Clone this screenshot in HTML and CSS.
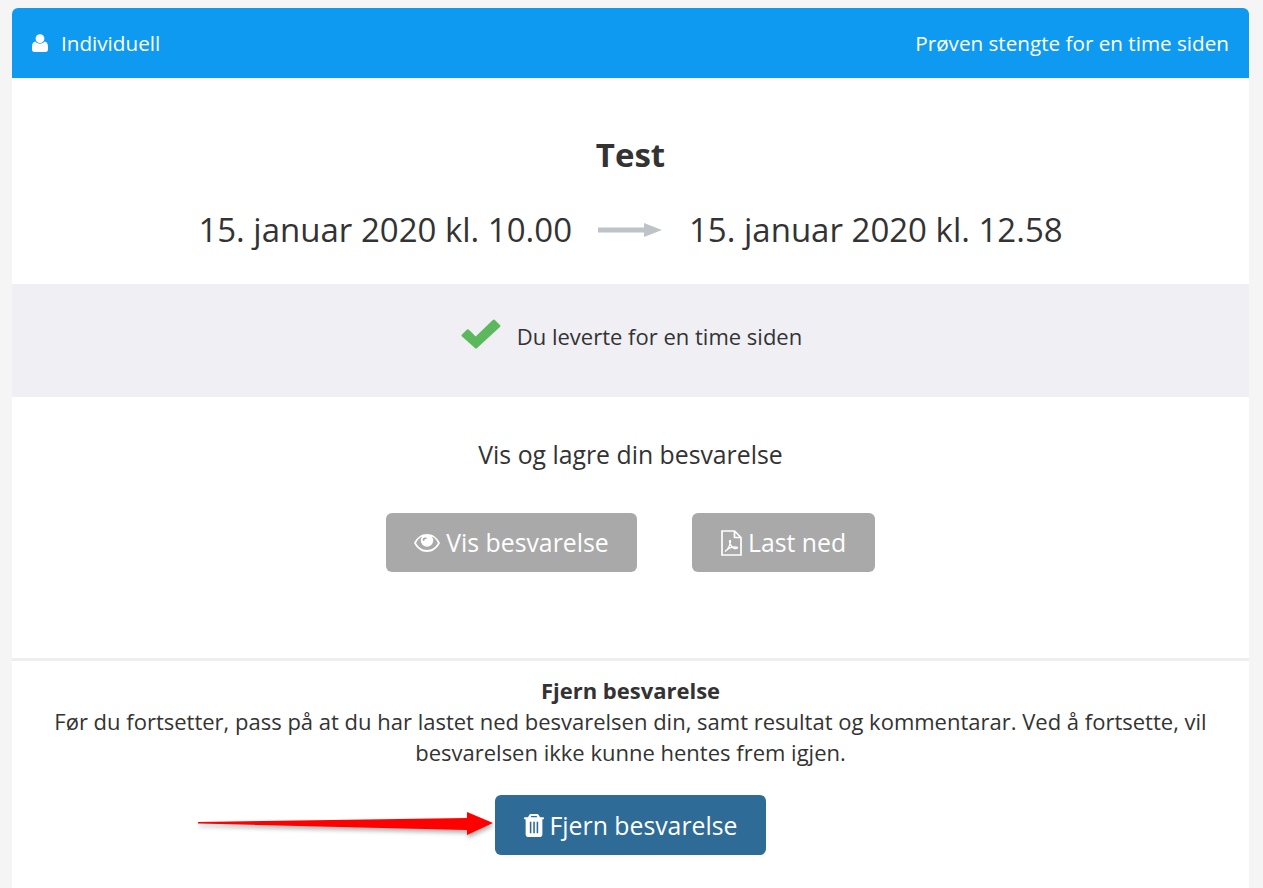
FILE: index.html
```html
<!DOCTYPE html>
<html lang="no">
<head>
<meta charset="utf-8">
<title>Test</title>
<link rel="stylesheet" href="styles.css">
</head>
<body>
<main class="card">
  <header class="card-head">
    <span class="head-left">
      <svg class="icon-user" viewBox="0 0 16 18"><circle cx="8" cy="4.6" r="4.4"/><path d="M3.4 7.6C4.6 9 6.2 9.7 8 9.7s3.400-.7 4.600-2.100C14.700 7.800 16 9.600 16 13v2.600c0 1.400-1 2.400-2.400 2.400H2.400C1 18 0 17 0 15.600V13c0-3.400 1.300-5.200 3.400-5.400z"/></svg>
      Individuell
    </span>
    <span>Prøven stengte for en time siden</span>
  </header>
  <section class="summary">
    <h1 class="title">Test</h1>
    <div class="dates">
      <span>15. januar 2020 kl. 10.00</span>
      <svg class="icon-arrow" viewBox="0 0 65 14"><path d="M0 4.500h46V0l18 7-18 7V9.500H0z"/></svg>
      <span>15. januar 2020 kl. 12.58</span>
    </div>
  </section>
  <section class="status">
    <svg class="icon-check" viewBox="0 0 40 30"><path d="M1 15.500l4.800-4.800a1.500 1.500 0 0 1 2.100 0l6.800 6.800L31.800 1a1.500 1.500 0 0 1 2.100 0l5 5a1.500 1.500 0 0 1 0 2.100L16.100 29a1.500 1.500 0 0 1-2.100 0L1 17.600a1.500 1.500 0 0 1 0-2.100z"/></svg>
    <span>Du leverte for en time siden</span>
  </section>
  <section class="answer">
    <p class="answer-title">Vis og lagre din besvarelse</p>
    <div class="answer-actions">
      <a class="btn btn-grey">
        <svg class="icon-eye" viewBox="0 0 26 18"><path fill-rule="evenodd" d="M13 0c5.600 0 10.200 3.400 13 9-2.800 5.600-7.400 9-13 9S2.800 14.600 0 9c2.800-5.600 7.400-9 13-9zM8.300 2.500C5.600 3.500 3.500 5.800 2.100 9c2 3.900 5.800 7 10.900 7s8.900-3.100 10.900-7c-1.400-3.200-3.500-5.500-6.200-6.500a6.200 6.200 0 1 1-9.400 0zM11 3.500a2.400 2.400 0 0 0-2.300 2.600c0 .5.400.9.900.9s.9-.4.900-.9c0-.8.700-1 1.500-1 .5 0 .8-.4.800-.8s-.3-.8-.8-.8z"/></svg>
        Vis besvarelse
      </a>
      <a class="btn btn-grey">
        <svg class="icon-pdf" viewBox="0 0 21 26"><path fill="none" stroke="currentColor" stroke-width="1.700" d="M1 1h12.500L20 7.500V25H1zM13.500 1v6.500H20"/><path fill="none" stroke="currentColor" stroke-width="1.400" d="M4 21.500c2.500-1.500 4.700-5.500 5.500-10 .2-1.300-.9-1.300-1-.2-.2 2 2.500 6.500 4.500 7 1.300.3 3 .1 3.500-.7-.6-1-4.500-1-7.500.3-2 .9-3.800 2.500-5 3.600z"/></svg>
        Last ned
      </a>
    </div>
  </section>
  <section class="remove">
    <h2 class="remove-title">Fjern besvarelse</h2>
    <p class="remove-text">Før du fortsetter, pass på at du har lastet ned besvarelsen din, samt resultat og kommentarar. Ved å fortsette, vil besvarelsen ikke kunne hentes frem igjen.</p>
    <a class="btn btn-blue">
      <svg class="icon-trash" viewBox="0 0 19 22"><path fill-rule="evenodd" d="M6.400 0h6.200c.5 0 1 .3 1.300.8L15.300 3H18c.6 0 1 .4 1 1v.500c0 .3-.2.500-.5.500H17.500v14.500c0 1.400-1.100 2.500-2.500 2.500H4c-1.400 0-2.500-1.100-2.500-2.500V5H.5C.2 5 0 4.800 0 4.500V4c0-.6.400-1 1-1h2.700L5.100.8C5.400.3 5.900 0 6.400 0zM6.200 3h6.600l-.8-1.200H7zM5.500 7.500v11h1.500v-11zM8.800 7.500v11h1.500v-11zM12 7.500v11h1.500v-11z"/></svg>
      Fjern besvarelse
    </a>
    <svg class="red-arrow" viewBox="0 0 300 30"><path d="M0 13 269 9 269 3 295 14 269 26 269 21 0 14.500z"/></svg>
  </section>
</main>
</body>
</html>
```
FILE: styles.css
```css
* { box-sizing: border-box; }
html, body { margin: 0; height: 100%; overflow: hidden; }
body {
  background: #f5f5f5;
  padding: 8px 14px 0 12px;
  font-family: "Open Sans", sans-serif;
  color: #333;
}
.card {
  background: #fff;
  border-radius: 6px 6px 0 0;
  height: 900px;
}
.card-head {
  height: 70px;
  background: #0f9af2;
  color: #fff;
  border-radius: 6px 6px 0 0;
  padding: 0 20px;
  display: flex;
  align-items: center;
  justify-content: space-between;
  font-size: 20.66px;
}
.head-left { display: flex; align-items: center; gap: 13px; }
.icon-user { width: 16px; height: 18px; fill: #fff; }
.summary { height: 206px; padding-top: 53px; text-align: center; }
.title { margin: 0; font-size: 33px; line-height: 48px; font-weight: 700; }
.dates {
  margin-top: 29px;
  display: flex;
  justify-content: center;
  align-items: center;
  gap: 26px;
  font-size: 33px;
  line-height: 44px;
}
.icon-arrow { width: 65px; height: 14px; fill: #bdc3c7; }
.status {
  height: 113px;
  background: #efeff4;
  padding: 0 0 10px 2px;
  display: flex;
  align-items: center;
  justify-content: center;
  gap: 16px;
  font-size: 22px;
}
.icon-check { width: 40px; height: 30px; margin-bottom: 3px; fill: #5cb85c; }
.answer { height: 264px; border-bottom: 3px solid #eee; padding-top: 40px; text-align: center; }
.answer-title { margin: 0; font-size: 24.8px; line-height: 34px; }
.answer-actions { margin-top: 42px; display: flex; justify-content: center; gap: 55px; }
.btn {
  display: inline-flex;
  align-items: center;
  justify-content: center;
  gap: 6px;
  height: 59px;
  padding-bottom: 1px;
  border-radius: 6px;
  color: #fff;
  font-size: 24.8px;
}
.btn-grey { background: #a9a9a9; }
.btn-grey:first-child { width: 251px; }
.btn-grey:last-child { width: 183px; }
.icon-eye { width: 26px; height: 18px; margin-top: 1px; fill: #fff; }
.icon-pdf { width: 21px; height: 26px; margin-top: 1px; }
.remove { position: relative; text-align: center; padding-top: 14px; }
.remove-title { margin: 0; font-size: 22px; line-height: 31px; font-weight: 700; }
.remove-text { margin: 0 auto; width: 1180px; font-size: 22px; line-height: 31px; }
.btn-blue { background: #2e6b97; width: 271px; height: 60px; margin-top: 27px; }
.icon-trash { width: 20px; height: 23px; margin-top: 1px; fill: #fff; }
.red-arrow {
  position: absolute;
  left: 186px;
  top: 148px;
  width: 300px;
  height: 30px;
  fill: #fe0000;
  filter: drop-shadow(1px 3px 2px rgba(0,0,0,.3));
}
```
